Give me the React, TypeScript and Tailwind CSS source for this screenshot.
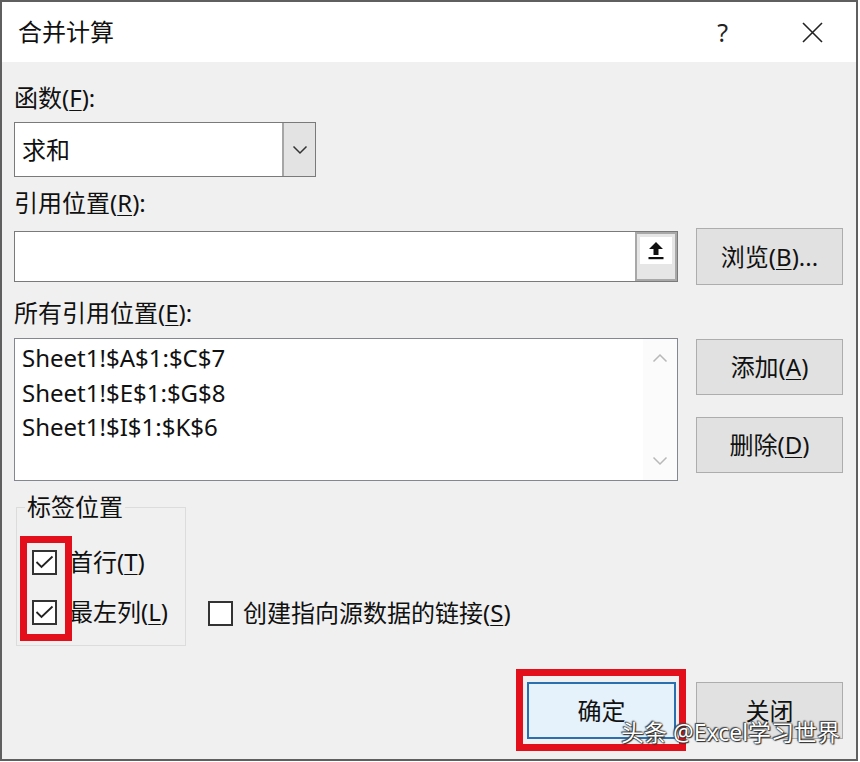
import React from 'react';

const font = "font-['Noto_Sans','Noto_Sans_CJK_SC',sans-serif]";

const Key = ({ children }: { children: React.ReactNode }) => (
  <span className="underline decoration-1 underline-offset-[3px]">{children}</span>
);

const Label = ({ children, className = '' }: { children: React.ReactNode; className?: string }) => (
  <div className={`h-[36px] flex items-center text-[24px] leading-none text-[#111] ${className}`}>{children}</div>
);

const Button = ({ children, className = '' }: { children: React.ReactNode; className?: string }) => (
  <div
    className={`w-[147px] flex items-center justify-center bg-[#e1e1e1] border border-[#adadad] text-[24px] leading-none text-[#111] ${className}`}
  >
    {children}
  </div>
);

const CheckBox = ({ checked }: { checked?: boolean }) => (
  <div className="w-[25px] h-[25px] shrink-0 border-2 border-[#333] bg-white flex items-center justify-center">
    {checked && (
      <svg width="21" height="21" viewBox="0 0 21 21">
        <path d="M2.5 10 L7.5 15 L18.5 4.5" fill="none" stroke="#222" strokeWidth="1.8" />
      </svg>
    )}
  </div>
);

const Chevron = ({ up, color = '#333' }: { up?: boolean; color?: string }) => (
  <svg width="16" height="10" viewBox="0 0 16 10">
    <path d={up ? 'M1.5 8.5 L8 2 L14.5 8.5' : 'M1.5 1.5 L8 8 L14.5 1.5'} fill="none" stroke={color} strokeWidth="1.5" />
  </svg>
);

export default function App() {
  return (
    <div className={`relative w-[860px] h-[762px] bg-white overflow-hidden ${font}`}>
      <div className="w-[858px] h-[761px] border-2 border-[#5f5f5f] flex flex-col">
        {/* title bar */}
        <div className="h-[60px] shrink-0 bg-white flex items-center pl-[16px] pr-[33px]">
          <div className="text-[24px] leading-none text-[#111]">合并计算</div>
          <div className="ml-auto flex items-center gap-[74px]">
            <span className="text-[25px] leading-none text-[#222]">?</span>
            <svg width="21" height="21" viewBox="0 0 21 21">
              <path d="M1 1 L20 20 M20 1 L1 20" stroke="#222" strokeWidth="1.6" />
            </svg>
          </div>
        </div>

        {/* body */}
        <div className="flex-1 bg-[#f0f0f0] pl-[12px] pr-[13px] flex flex-col">
          <Label className="mt-[18px]">
            函数(<Key>F</Key>):
          </Label>
          <div className="mt-[6px] w-[302px] h-[55px] flex border border-[#7a7a7a] bg-white">
            <div className="flex-1 flex items-center pl-[7px] text-[24px] leading-none text-[#111]">求和</div>
            <div className="w-[33px] bg-[#e3e3e3] border-l-2 border-[#a6a6a6] flex items-center justify-center">
              <Chevron />
            </div>
          </div>

          <Label className="mt-[8px]">
            引用位置(<Key>R</Key>):
          </Label>
          <div className="mt-[7px] h-[57px] flex items-center gap-[18px]">
            <div className="flex-1 h-[51px] flex border border-[#7a7a7a] bg-white">
              <div className="flex-1" />
              <div className="w-[42px] bg-[#e6e6e6] border-2 border-[#a8a8a8] flex flex-col items-center pt-[3px]">
                <div className="w-[32px] h-[27px] bg-white flex items-center justify-center">
                  <svg width="18" height="19" viewBox="0 0 18 19">
                    <path d="M9 1 L16 8 L11.5 8 L11.5 14 L6.5 14 L6.5 8 L2 8 Z" fill="#111" />
                    <rect x="1.5" y="16" width="15" height="2.2" fill="#111" />
                  </svg>
                </div>
              </div>
            </div>
            <Button className="h-[57px]">
              浏览(<Key>B</Key>)...
            </Button>
          </div>

          <Label className="mt-[10px]">
            所有引用位置(<Key>E</Key>):
          </Label>
          <div className="mt-[7px] flex items-start gap-[18px]">
            <div className="flex-1 h-[143px] flex border border-[#828790] bg-white">
              <div className="flex-1 pl-[7px] pt-[2px] text-[24px] leading-[34.5px] text-[#111]">
                <div>Sheet1!$A$1:$C$7</div>
                <div>Sheet1!$E$1:$G$8</div>
                <div>Sheet1!$I$1:$K$6</div>
              </div>
              <div className="w-[34px] bg-[#fbfbfb] flex flex-col items-center justify-between py-[14px]">
                <Chevron up color="#b8b8b8" />
                <Chevron color="#b8b8b8" />
              </div>
            </div>
            <div className="pt-[1px] flex flex-col gap-[22px]">
              <Button className="h-[56px]">
                添加(<Key>A</Key>)
              </Button>
              <Button className="h-[56px]">
                删除(<Key>D</Key>)
              </Button>
            </div>
          </div>

          <div className="mt-[14px] flex items-end">
            <fieldset className="ml-[2px] w-[170px] border border-[#dcdcdc] pt-[25px] pb-[15px]">
              <legend className="ml-[8px] px-[2px] text-[24px] leading-[24px] text-[#111]">标签位置</legend>
              <div className="pl-[15px] flex flex-col gap-[14px]">
                <div className="h-[36px] flex items-center gap-[12px]">
                  <CheckBox checked />
                  <span className="text-[24px] leading-none text-[#111]">
                    首行(<Key>T</Key>)
                  </span>
                </div>
                <div className="h-[36px] flex items-center gap-[12px]">
                  <CheckBox checked />
                  <span className="text-[24px] leading-none text-[#111]">
                    最左列(<Key>L</Key>)
                  </span>
                </div>
              </div>
            </fieldset>
            <div className="ml-[22px] mb-[15px] h-[36px] flex items-center gap-[10px]">
              <CheckBox />
              <span className="text-[24px] leading-none text-[#111]">
                创建指向源数据的链接(<Key>S</Key>)
              </span>
            </div>
          </div>

          <div className="mt-[36px] flex justify-end gap-[20px]">
            <div className="w-[149px] h-[57px] flex items-center justify-center bg-[#e5f1fb] border-2 border-[#2a6fb0] text-[24px] leading-none text-[#111]">
              确定
            </div>
            <Button className="h-[57px]">关闭</Button>
          </div>
        </div>
      </div>

      {/* annotations */}
      <div className="absolute left-[20px] top-[536px] w-[52px] h-[105px] border-[7px] border-[#e3101b]" />
      <div className="absolute left-[516px] top-[669px] w-[170px] h-[82px] border-[7px] border-[#e3101b]" />
      <div className="absolute left-[621px] top-[717px] text-[23px] leading-[30px] text-white [text-shadow:0_0_1px_#222,0_0_2px_#222,1px_1px_1px_#333,-1px_-1px_1px_#555]">
        头条 @Excel学习世界
      </div>
    </div>
  );
}
